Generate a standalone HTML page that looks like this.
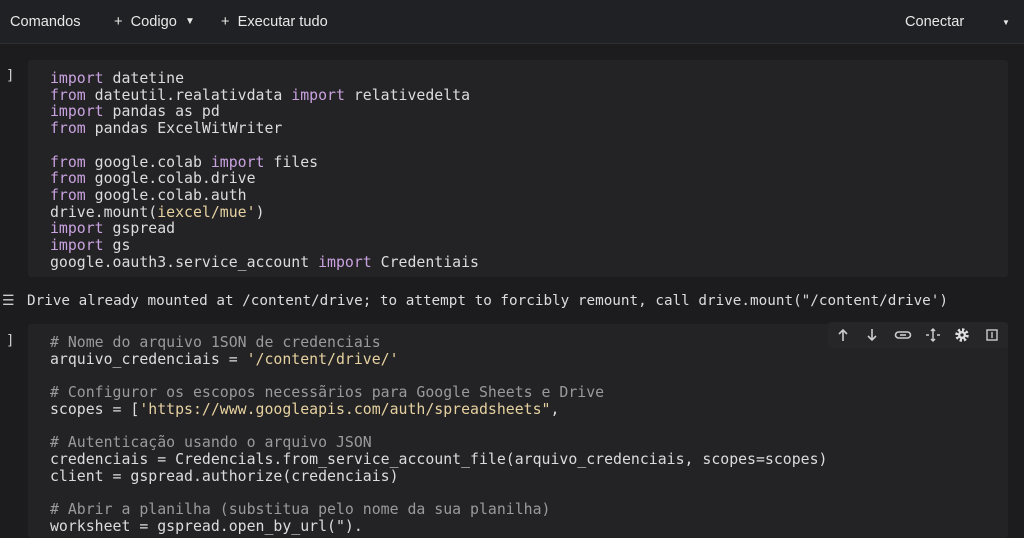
<!DOCTYPE html>
<html><head><meta charset="utf-8"><style>
body{margin:0;width:1024px;height:538px;overflow:hidden;background:#1c1c1e;font-family:"Liberation Sans",sans-serif;color:#e3e3e3;position:relative}
.top{position:absolute;left:0;top:0;width:1024px;height:43px;background:#202124;border-bottom:1px solid #2e2f31}
.top span{position:absolute;top:14px;font-size:14.6px;color:#e8e8e8}
.cell{position:absolute;left:28px;width:980px;background:#232325;border-radius:3px}
pre{margin:0;position:absolute;left:50px;font-family:"DejaVu Sans Mono",monospace;font-size:14.85px;line-height:16.7px;color:#dcdcdc}
.k{color:#c9a2e0}.c{color:#9a9a9a}.s{color:#e6d1a0}
.br{position:absolute;left:6px;font-family:"DejaVu Sans Mono",monospace;font-size:14px;color:#ccc}
.tb{position:absolute;left:828px;top:322px;width:180px;height:26px;background:#262628;border-radius:3px}
.tb svg{position:absolute;top:5px}
</style></head><body>
<div class="top">
<span style="left:10px">Comandos</span>
<span style="left:114px">+&nbsp; Codigo &nbsp;<small style="font-size:10px;vertical-align:2px">▼</small></span>
<span style="left:221px">+&nbsp; Executar tudo</span>
<span style="left:905px">Conectar</span>
<span style="left:1002px;font-size:8px;top:18px">▼</span>
</div>
<div class="cell" style="top:60px;height:217px"></div>
<div class="br" style="top:68px">]</div>
<pre style="top:70px"><span class="k">import</span> datetine
<span class="k">from</span> dateutil.realativdata <span class="k">import</span> relativedelta
<span class="k">import</span> pandas as pd
<span class="k">from</span> pandas ExcelWitWriter

<span class="k">from</span> google.colab <span class="k">import</span> files
<span class="k">from</span> google.colab.drive
<span class="k">from</span> google.colab.auth
drive.mount(<span class="s">iexcel/mue'</span>)
<span class="k">import</span> gspread
<span class="k">import</span> gs
google.oauth3.service_account <span class="k">import</span> Credentiais</pre>
<div class="br" style="top:293px;left:2px">☰</div>
<pre style="top:293px;left:27px;font-size:14.3px">Drive already mounted at /content/drive; to attempt to forcibly remount, call drive.mount("/content/drive')</pre>
<div class="cell" style="top:324px;height:214px"></div>
<div class="br" style="top:333px">]</div>
<div class="tb">
<svg style="left:8px" width="14" height="16" viewBox="0 0 14 16" fill="none" stroke="#ccc" stroke-width="1.6"><path d="M7 14V3M3 7l4-4 4 4"/></svg>
<svg style="left:37px" width="14" height="16" viewBox="0 0 14 16" fill="none" stroke="#ccc" stroke-width="1.6"><path d="M7 2v11M3 9l4 4 4-4"/></svg>
<svg style="left:66px" width="18" height="16" viewBox="0 0 18 16" fill="none" stroke="#ccc" stroke-width="1.6"><rect x="1.5" y="5" width="15" height="6" rx="3"/><path d="M6 8h6"/></svg>
<svg style="left:97px" width="16" height="16" viewBox="0 0 16 16" fill="none" stroke="#ccc" stroke-width="1.5"><path d="M8 2v12M6 4l2-2 2 2M6 12l2 2 2-2M1 8h3M12 8h3"/></svg>
<svg style="left:126px" width="16" height="16" viewBox="0 0 16 16"><circle cx="8" cy="8" r="5" fill="none" stroke="#ddd" stroke-width="3.5" stroke-dasharray="2.2 1.7"/><circle cx="8" cy="8" r="4" fill="#ddd"/><circle cx="8" cy="8" r="1.6" fill="#262628"/></svg>
<svg style="left:157px" width="14" height="16" viewBox="0 0 14 16" fill="none" stroke="#ccc" stroke-width="1.4"><rect x="2" y="3" width="10" height="10"/><path d="M7 5v6"/></svg>
</div>
<pre style="top:334px"><span class="c"># Nome do arquivo 1SON de credenciais</span>
arquivo_credenciais = <span class="s">'/content/drive/'</span>

<span class="c"># Configuror os escopos necessãrios para Google Sheets e Drive</span>
scopes = [<span class="s">'https://www.googleapis.com/auth/spreadsheets"</span>,

<span class="c"># Autenticação usando o arquivo JSON</span>
credenciais = Credencials.from_service_account_file(arquivo_credenciais, scopes=scopes)
client = gspread.authorize(credenciais)

<span class="c"># Abrir a planilha (substitua pelo nome da sua planilha)</span>
worksheet = gspread.open_by_url(").</pre>
</body></html>
